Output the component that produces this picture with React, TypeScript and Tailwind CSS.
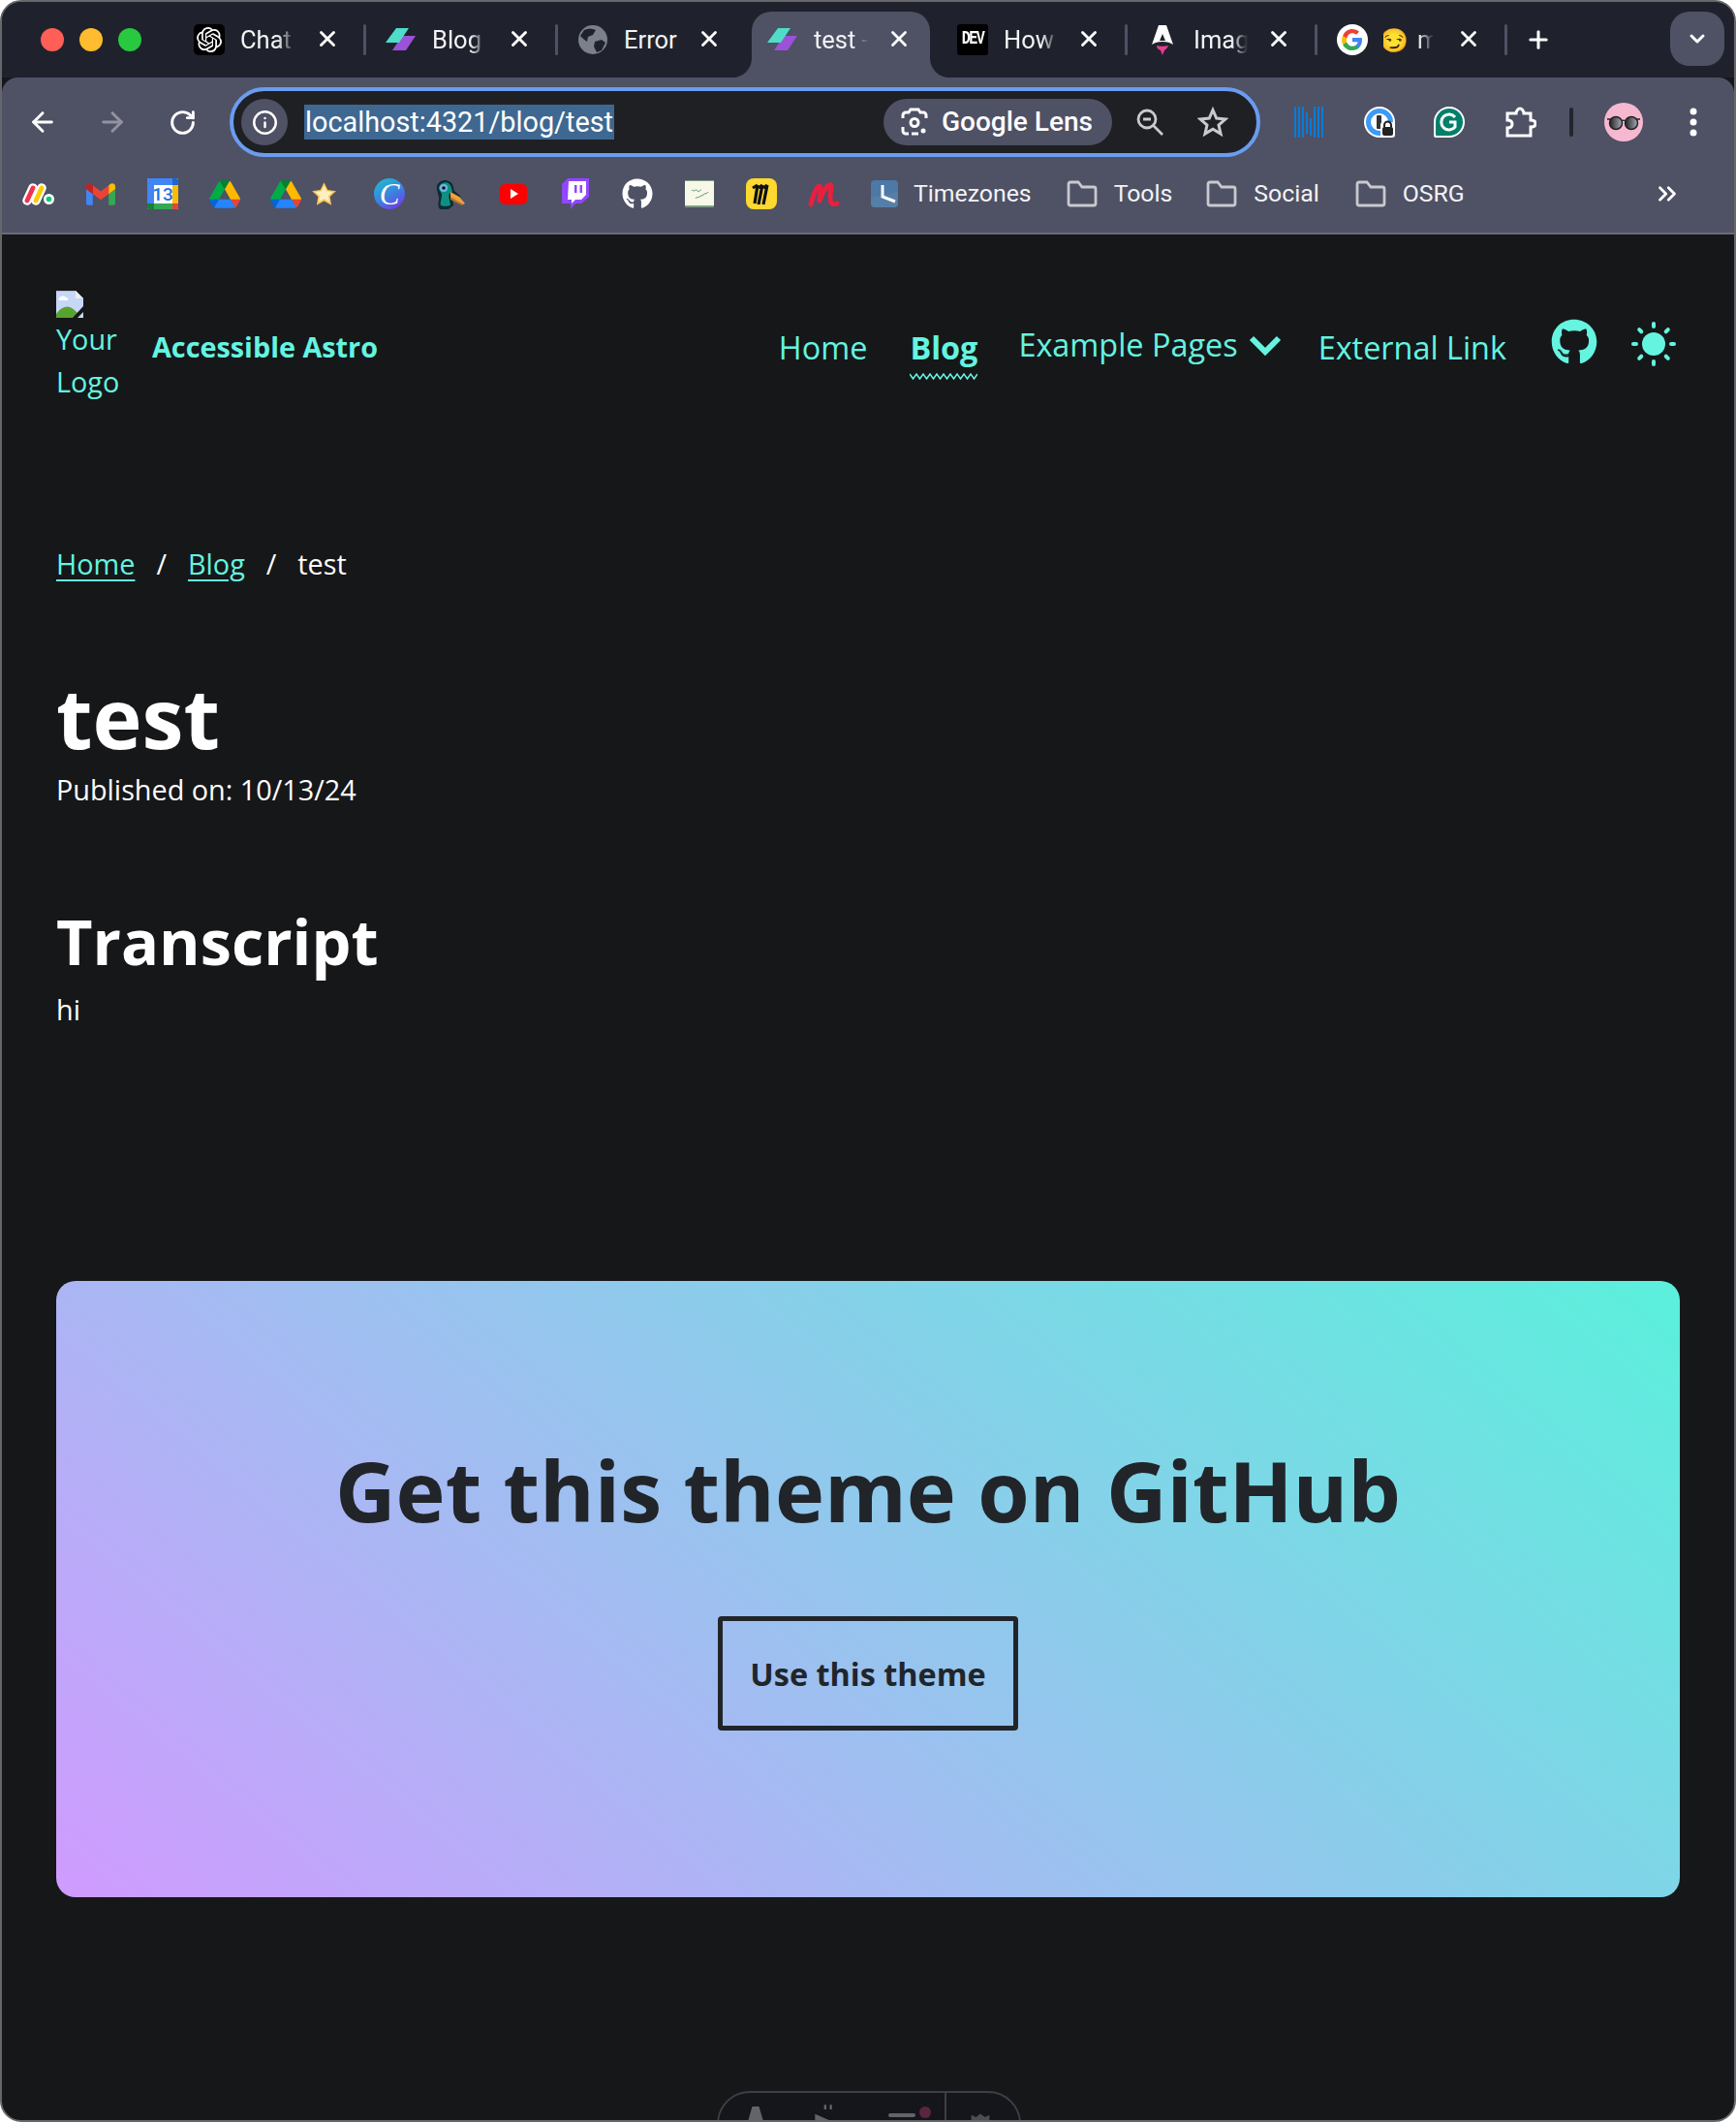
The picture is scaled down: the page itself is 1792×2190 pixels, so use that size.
import React from "react";
import { SiOpenai } from "react-icons/si";
import { FaGithub } from "react-icons/fa";
import { Info, ArrowLeft, ArrowRight, RotateCw, X, Plus, ChevronDown, ChevronsRight } from "lucide-react";

const Astro = () => (
  <svg viewBox="0 0 32 32" className="w-8 h-8">
    <path d="M7 27l10-15h14L21 27z" fill="#9b51d8" />
    <path d="M0 19L11 4h13L14 19z" fill="#4fdcc8" />
  </svg>
);

const Globe = () => (
  <svg viewBox="0 0 32 32" className="w-8 h-8">
    <circle cx="16" cy="16" r="15" fill="#7c808a" />
    <path d="M7 6c4-2 8-2 12 0l-3 5-5 2-1 5-4-3-3-3zM18 18l7-2 4 3-4 8-5 2-3-6z" fill="#1f222c" />
  </svg>
);

const Dev = () => (
  <div className="w-8 h-8 bg-black rounded-[3px] flex items-center justify-center text-white text-[15px] font-bold [font-family:'Liberation_Mono',monospace] tracking-[-1.500px]">
    <span className="[transform:scaleY(1.350)]">DEV</span>
  </div>
);

const AstroRocket = () => (
  <svg viewBox="0 0 32 32" className="w-8 h-8">
    <path d="M12 1h8l7 20c-3-2-6-3-11-3s-8 1-11 3z" fill="#fff" />
    <path d="M16 10l3 7h-6z" fill="#1f222c" />
    <path d="M10 22c2 1 10 1 12 0-1 3-3 4-4 5l-2 5-2-5c-2-1-4-2-4-5z" fill="#ea3d92" />
  </svg>
);

const GoogleG = ({ size = 32 }: { size?: number }) => (
  <svg viewBox="0 0 32 32" width={size} height={size}>
    <circle cx="16" cy="16" r="16" fill="#fff" />
    <path d="M26 16.300c0-.8-.1-1.500-.2-2.200H16v4.200h5.600c-.2 1.400-1 2.500-2.100 3.300v2.700h3.400c2-1.800 3.100-4.600 3.100-8z" fill="#4285f4" />
    <path d="M16 27c2.800 0 5.100-.9 6.900-2.500l-3.400-2.700c-.9.600-2.100 1-3.500 1-2.700 0-5-1.800-5.800-4.300H6.200v2.700C8 24.700 11.700 27 16 27z" fill="#34a853" />
    <path d="M10.200 18.500c-.4-1.300-.4-2.700 0-4v-2.700H6.200c-1.500 3-1.500 6.400 0 9.400z" fill="#fbbc05" />
    <path d="M16 9.200c1.500 0 2.900.5 4 1.600l3-3C21.100 6 18.700 5 16 5c-4.300 0-8 2.300-9.800 6.800l4 2.700C11 11 13.300 9.200 16 9.200z" fill="#ea4335" />
  </svg>
);

const tabs: { icon: React.ReactNode; text?: string; extra?: React.ReactNode; active?: boolean; sep?: boolean; wide?: boolean; full?: boolean }[] = [
  { icon: <div className="w-8 h-8 bg-black rounded-[5px] flex items-center justify-center"><SiOpenai className="text-white text-[26px]" /></div>, text: "Chat GPT", sep: true, wide: true },
  { icon: <Astro />, text: "Blog Posts", sep: true, wide: true },
  { icon: <Globe />, text: "Error", sep: false, full: true },
  { icon: <Astro />, text: "test - Acc", active: true, sep: false },
  { icon: <Dev />, text: "How to", sep: true },
  { icon: <AstroRocket />, text: "Images", sep: true },
  { icon: <GoogleG />, extra: <span className="text-[24px] leading-none">😏</span>, text: "m", sep: true },
];

const Tab = ({ t }: { t: (typeof tabs)[number] }) => (
  <div className={`relative h-[68px] flex items-start pl-[22px] pt-[13px] shrink-0 ${t.wide ? "w-[198px]" : "w-[196px]"}`}>
    {t.active && (
      <>
        <div className="absolute left-[6px] right-[6px] top-0 bottom-0 bg-[#4f5165] rounded-t-[20px]" />
        <div className="absolute left-[-14px] bottom-0 w-5 h-5 bg-[#4f5165]"><div className="w-full h-full bg-[#1f222c] rounded-br-[20px]" /></div>
        <div className="absolute right-[-14px] bottom-0 w-5 h-5 bg-[#4f5165]"><div className="w-full h-full bg-[#1f222c] rounded-bl-[20px]" /></div>
      </>
    )}
    <div className="relative w-8 h-8 shrink-0 flex items-center justify-center">{t.icon}</div>
    {t.full ? (
      <div className="relative ml-4 flex items-center h-8 text-[25.500px] text-[#f2f3f5] whitespace-nowrap">{t.text}</div>
    ) : (
      <div className={`relative ml-4 flex items-center h-8 text-[25.500px] text-[#f2f3f5] whitespace-nowrap overflow-hidden [mask-image:linear-gradient(to_right,black_70%,transparent)] ${t.extra ? "w-[52px]" : "w-[56px]"}`}>
        {t.extra && <span className="mr-[9px] ml-[-4px]">{t.extra}</span>}
        {t.text}
      </div>
    )}
    <X className={`absolute top-[15px] text-white ${t.wide ? "left-[147px]" : "left-[145px]"}`} size={26} strokeWidth={2.600} />
    {t.sep && <div className="absolute right-[-2px] top-[13px] w-[3px] h-8 bg-[#4f5165] rounded-full" />}
  </div>
);

const Bm = ({ children }: { children: React.ReactNode }) => (
  <div className="h-10 w-16 flex items-center justify-center shrink-0">{children}</div>
);

function Drive() {
  return (
    <svg viewBox="0 0 87.300 78" className="w-8 h-[29px]">
      <path d="M6.600 66.850l3.850 6.650c.8 1.400 1.950 2.500 3.300 3.300l13.750-23.800H0c0 1.550.4 3.100 1.200 4.500z" fill="#0066da" />
      <path d="M43.650 25L29.900 1.200c-1.350.8-2.500 1.900-3.300 3.300L1.200 48.500A9.060 9.060 0 000 53h27.500z" fill="#00ac47" />
      <path d="M73.550 76.800c1.350-.8 2.500-1.900 3.300-3.300l1.600-2.750 7.650-13.250c.8-1.400 1.200-2.950 1.200-4.500H59.800l5.850 11.500z" fill="#ea4335" />
      <path d="M43.650 25L57.400 1.200C56.050.4 54.500 0 52.900 0H34.400c-1.600 0-3.150.45-4.500 1.200z" fill="#00832d" />
      <path d="M59.800 53H27.500L13.750 76.800c1.350.8 2.900 1.200 4.500 1.200h50.800c1.600 0 3.150-.45 4.500-1.200z" fill="#2684fc" />
      <path d="M73.400 26.500l-12.700-22c-.8-1.400-1.950-2.500-3.300-3.300L43.650 25 59.800 53h27.450c0-1.550-.4-3.100-1.200-4.500z" fill="#ffba00" />
    </svg>
  );
}

const FolderIcon = ({ ml }: { ml: string }) => (
  <svg viewBox="0 0 32 28" className={`w-8 h-7 shrink-0 ${ml}`} fill="none" stroke="#c9c9cf" strokeWidth="2.800">
    <path d="M2 4a2 2 0 012-2h8l4 5h12a2 2 0 012 2v15a2 2 0 01-2 2H4a2 2 0 01-2-2z" />
  </svg>
);

const Bookmarks = () => (
  <div className="h-[68px] flex items-center pl-[6px] pb-[12px] shrink-0 text-[24.800px] text-[#f2f3f5]">
    <Bm>
      <svg viewBox="0 0 34 24" className="w-[34px] h-6" strokeLinecap="round" fill="none">
        <path d="M5 19L11 6M14 19L20 6" stroke="#fff" strokeWidth="9.500" />
        <circle cx="27.500" cy="17.500" r="5.500" fill="#fff" />
        <path d="M5 19L11 6" stroke="#f0344f" strokeWidth="4.800" />
        <path d="M14 19L20 6" stroke="#ffcb00" strokeWidth="4.800" />
        <circle cx="27.500" cy="17.500" r="2.800" fill="#00ca72" />
      </svg>
    </Bm>
    <Bm>
      <svg viewBox="52 42 88 66" className="w-[30px] h-[23px]">
        <path fill="#4285f4" d="M58 108h14V74L52 59v43c0 3.320 2.690 6 6 6" />
        <path fill="#34a853" d="M120 108h14c3.320 0 6-2.690 6-6V59l-20 15" />
        <path fill="#fbbc04" d="M120 48v26l20-15v-8c0-7.420-8.470-11.650-14.400-7.200" />
        <path fill="#ea4335" d="M72 74V48l24 18 24-18v26L96 92" />
        <path fill="#c5221f" d="M52 51v8l20 15V48l-5.600-4.200c-5.940-4.450-14.400-.22-14.400 7.200" />
      </svg>
    </Bm>
    <Bm>
      <div className="relative w-8 h-8 bg-white rounded-[2px] overflow-hidden flex items-center justify-center text-[#1a73e8] text-[19px] font-medium leading-none">
        13
        <div className="absolute top-0 inset-x-0 h-[7px] bg-[#4285f4]" />
        <div className="absolute left-0 inset-y-0 w-[7px] bg-[#4285f4]" />
        <div className="absolute right-0 inset-y-0 w-[6px] bg-[#fbbc05]" />
        <div className="absolute top-0 right-0 w-[6px] h-[7px] bg-[#1967d2]" />
        <div className="absolute bottom-0 inset-x-0 h-[6px] bg-[#34a853]" />
        <div className="absolute bottom-0 left-0 w-[7px] h-[6px] bg-[#188038]" />
        <div className="absolute bottom-0 right-0 w-[6px] h-[6px] bg-[#ea4335]" />
      </div>
    </Bm>
    <Bm><Drive /></Bm>
    <div className="ml-[15px] w-8 flex justify-center shrink-0"><Drive /></div>
    <div className="ml-[10px] w-[27px] flex justify-center shrink-0">
      <svg viewBox="0 0 24 24" className="w-[27px] h-[27px]"><path d="M12 1l3.400 7 7.600 1-5.500 5.300 1.300 7.700-6.800-3.700-6.800 3.700 1.300-7.700L1 9l7.600-1z" fill="#f7c552" /><path d="M12 4l2.500 5 5.500.8-4 3.800 1 5.400-5-2.700-5 2.700 1-5.400-4-3.800 5.500-.8z" fill="#feefc0" /></svg>
    </div>
    <div className="ml-[22px] flex shrink-0">
      <Bm>
        <div className="w-8 h-8 rounded-full bg-[linear-gradient(150deg,#19c4cf,#3f7de0_55%,#7d2ae8)] flex items-center justify-center text-white italic text-[31px] leading-none [font-family:'Liberation_Serif',serif]">C</div>
      </Bm>
      <Bm>
        <svg viewBox="0 0 32 32" className="w-8 h-8">
          <path d="M1 8c2-6 9-8 14-4 3 2 3 6 4 9l7 6-9 1 1 8-5 4H5c-3-1-3-5-2-9 1-5-3-10-2-15z" fill="#0d2b30" />
          <path d="M3 9c2-5 8-6 11-3 2 2 2 5 3 8-4 1-4 4-3 8l1 6c-3 1-8 1-10 0-1-3 1-7 1-11 0-3-4-5-3-8z" fill="#0e8f83" />
          <circle cx="8" cy="10" r="4" fill="#6fb6e8" /><circle cx="8" cy="10" r="1.800" fill="#111" />
          <path d="M15 14l9 5 6 7-2 1-13-7z" fill="#f0a13a" />
          <path d="M15 19l13 8-1 1-12-6z" fill="#b9772a" />
        </svg>
      </Bm>
      <Bm>
        <div className="w-7 h-[21px] rounded-[5px] bg-[#f00] flex items-center justify-center"><div className="w-0 h-0 border-y-[5px] border-y-transparent border-l-[8px] border-l-white ml-[1px]" /></div>
      </Bm>
      <Bm>
        <svg viewBox="0 0 28 32" className="w-7 h-8">
          <path d="M6 0h22v19l-8 7h-6l-5 6v-6H0V6z" fill="#9146ff" />
          <path d="M7 3h18v14l-5 5h-6l-4 4v-4H6z" fill="#fff" />
          <path d="M13 7h2.500v8H13zM18.500 7H21v8h-2.500z" fill="#9146ff" />
        </svg>
      </Bm>
      <Bm><FaGithub className="text-white text-[32px]" /></Bm>
      <Bm>
        <div className="w-[30px] h-[28px] bg-[#f8f8e8] rounded-[1px] border-b-2 border-t border-[#7fa08a] flex items-center justify-center">
          <svg viewBox="0 0 24 20" className="w-6 h-5"><path d="M4 7c2-2 2 1 3 0s1-2 3 0 2-1 4-1M8 15c2-3 2 0 4-2s3 0 4-2 3 0 5-3" stroke="#4f8a6a" strokeWidth="1" fill="none" /></svg>
        </div>
      </Bm>
      <Bm>
        <svg viewBox="0 0 32 32" className="w-8 h-8">
          <rect width="32" height="32" rx="8" fill="#ffd830" />
          <path d="M9 26L12 7M13 27l4-20M18 27L22 7M12 7L7 10M17 7l-4 3M22 7l-4 3" stroke="#111" strokeWidth="3.200" fill="none" />
        </svg>
      </Bm>
      <Bm>
        <svg viewBox="0 0 32 28" className="w-8 h-7" fill="none" stroke="#e8203f" strokeWidth="5" strokeLinecap="round" strokeLinejoin="round">
          <path d="M3 25C5 17 7 11 10 7c2-2 3 0 3 3l-1 11c3-8 6-14 10-16 2-1 2 1 2 3-1 6-2 12 0 15 1 2 3 2 6 1" />
        </svg>
      </Bm>
    </div>
    <svg viewBox="0 0 28 28" className="ml-[17px] w-7 h-7 shrink-0 rounded-[4px]">
      <rect width="28" height="28" fill="#4c79a6" />
      <path d="M0 18L28 12v16H0z" fill="#5b83a8" opacity=".6" />
      <path d="M12 5v12l13 5" stroke="#fff" strokeWidth="3" fill="none" />
    </svg>
    <span className="ml-[16px] shrink-0">Timezones</span>
    <FolderIcon ml="ml-[36px]" />
    <span className="ml-[17px] shrink-0">Tools</span>
    <FolderIcon ml="ml-[35px]" />
    <span className="ml-[17px] shrink-0">Social</span>
    <FolderIcon ml="ml-[37px]" />
    <span className="ml-[17px] shrink-0">OSRG</span>
    <ChevronsRight className="ml-auto mr-[54px] text-white" size={30} strokeWidth={2.200} />
  </div>
);

const Chrome = () => (
  <header className="shrink-0 [font-family:Roboto,sans-serif]">
    <div className="h-[78px] bg-[#1f222c] flex pt-[10px] relative">
      <div className="flex items-center gap-4 pl-[40px] w-[176px] h-[58px] shrink-0">
        <div className="w-6 h-6 rounded-full bg-[#ff5f57] shrink-0" />
        <div className="w-6 h-6 rounded-full bg-[#febc2e] shrink-0" />
        <div className="w-6 h-6 rounded-full bg-[#28c840] shrink-0" />
      </div>
      {tabs.map((t, i) => <Tab key={i} t={t} />)}
      <Plus className="ml-[20px] mt-[15px] text-white shrink-0" size={28} strokeWidth={2.600} />
      <div className="ml-auto mr-[10px] w-14 h-14 rounded-[20px] bg-[#4f5165] flex items-center justify-center shrink-0">
        <ChevronDown className="text-white" size={24} strokeWidth={3} />
      </div>
    </div>
    <div className="bg-[#4f5165] rounded-t-[16px] border-b-2 border-[#6b6c78] relative">
      <div className="h-[92px] flex items-center">
        <ArrowLeft className="ml-[26px] text-white shrink-0" size={32} strokeWidth={2.200} />
        <ArrowRight className="ml-[40px] text-[#92939f] shrink-0" size={32} strokeWidth={2.200} />
        <RotateCw className="ml-[42px] text-white shrink-0" size={29} strokeWidth={2.400} />
        <div className="ml-[34px] w-[1064px] h-[72px] rounded-full border-4 border-[#6a9cf0] bg-[#1f2024] flex items-center shrink-0 pl-2 pr-2">
          <div className="w-12 h-12 rounded-full bg-[#4f5165] flex items-center justify-center shrink-0">
            <Info className="text-white" size={27} strokeWidth={2.200} />
          </div>
          <span className="ml-[17px] h-[36px] px-[1px] bg-[#3e6891] text-white text-[28.800px] leading-[36px] whitespace-nowrap">localhost:4321/blog/test</span>
          <div className="ml-auto h-12 w-[236px] rounded-full bg-[#4f5165] flex items-center pl-[17px] text-white text-[28px] font-medium shrink-0">
            <svg viewBox="0 0 30 30" className="w-[30px] h-[30px] mr-[13px] shrink-0" fill="none" stroke="#fff" strokeWidth="3">
              <path d="M3 11V8a3 3 0 013-3h3l2-3h8l2 3h3a3 3 0 013 3v3M9 27H6a3 3 0 01-3-3v-4M19 27h-7" />
              <circle cx="15" cy="15.500" r="4" />
              <circle cx="24" cy="24" r="2.500" fill="#fff" stroke="none" />
            </svg>
            Google Lens
          </div>
          <svg viewBox="0 0 28 28" className="ml-[25px] w-7 h-7 shrink-0" fill="none" stroke="#c9c9cf" strokeWidth="2.800">
            <circle cx="11" cy="11" r="9" />
            <path d="M7 11h8M17.500 17.500L27 27" />
          </svg>
          <svg viewBox="0 0 32 32" className="ml-[35px] mr-[21px] w-8 h-8 shrink-0" fill="none" stroke="#c9c9cf" strokeWidth="3" strokeLinejoin="miter">
            <path d="M16 3.500l3.700 8.600 9.300.8-7 6.100 2.100 9.100-8.100-4.800-8.100 4.800 2.100-9.100-7-6.100 9.300-.8z" />
          </svg>
        </div>
        <svg viewBox="0 0 32 32" className="ml-[35px] w-8 h-8 shrink-0" stroke="#0a7bd8" strokeWidth="2" fill="none">
          <path d="M1 0v32M5 0v32M9 0v32M13 6v22M17 12v18M21 0v32M25 0v32M29 0v32" />
        </svg>
        <svg viewBox="0 0 32 32" className="ml-[40px] w-8 h-8 shrink-0">
          <circle cx="16" cy="16" r="16" fill="#fff" />
          <circle cx="16" cy="16" r="11.500" fill="none" stroke="#3d9bf5" strokeWidth="5" />
          <rect x="13" y="9" width="5" height="14" rx="1" fill="#333" />
          <rect x="17" y="16" width="15" height="16" rx="3" fill="#fff" />
          <rect x="19" y="21" width="11" height="9" rx="2" fill="#222" />
          <path d="M21 21v-2a3.500 3.500 0 017 0v2" fill="none" stroke="#222" strokeWidth="2" />
        </svg>
        <svg viewBox="0 0 32 32" className="ml-[40px] w-8 h-8 shrink-0">
          <path d="M0 16a16 16 0 1132 0v0a16 16 0 01-16 16H2a2 2 0 01-2-2z" fill="#fff" />
          <path d="M2 16a14 14 0 1128 0 14 14 0 01-14 14H3a1 1 0 01-1-1z" fill="#00806a" />
          <path d="M22 11a8 8 0 100 10v-5h-6" fill="none" stroke="#fff" strokeWidth="3" />
        </svg>
        <svg viewBox="0 0 33 32" className="ml-[41px] w-[33px] h-8 shrink-0" fill="none" stroke="#fff" strokeWidth="3">
          <path d="M3 7h9c0-2 2-5 4-5s4 3 4 5h7v7c3 0 5 1 5 3.500s-2 3.500-5 3.500v9H3v-8c3 0 5-1.500 5-4s-2-4-5-4z" />
        </svg>
        <div className="ml-[34px] w-1 h-[30px] bg-[#23252e] rounded-full shrink-0" />
        <svg viewBox="0 0 40 40" className="ml-[32px] w-10 h-10 shrink-0">
          <defs>
            <linearGradient id="lens" x1="0" y1="0" x2="1" y2="0"><stop offset="0" stopColor="#222" /><stop offset="1" stopColor="#aab" /></linearGradient>
          </defs>
          <circle cx="20" cy="20" r="20" fill="#f6b8cf" />
          <circle cx="12" cy="21" r="6.500" fill="url(#lens)" stroke="#222" strokeWidth="1.500" />
          <circle cx="28" cy="21" r="6.500" fill="url(#lens)" stroke="#222" strokeWidth="1.500" />
          <path d="M3 17h4M33 17h4M18 19c1-1 3-1 4 0" stroke="#222" strokeWidth="1.500" fill="none" />
        </svg>
        <svg viewBox="0 0 8 30" className="ml-[48px] w-2 h-[30px] shrink-0" fill="#fff">
          <circle cx="4" cy="4" r="3.500" /><circle cx="4" cy="15" r="3.500" /><circle cx="4" cy="26" r="3.500" />
        </svg>
      </div>
      <Bookmarks />
    </div>
  </header>
);

const TEAL = "text-[#64f4e0]";

const BrokenImage = () => (
  <svg viewBox="0 0 28 28" className="w-7 h-7 block">
    <path d="M0 0h20l8 8v20H0z" fill="#c7d7f7" />
    <path d="M20 0v8h8z" fill="#eee" />
    <path d="M0 28v-4c4-6 10-9 14-7 3 1 6 4 9 7l-4 4z" fill="#58a32e" />
    <path d="M3 8c2-3 5-3 7-1 3 0 3 3 1 3H4c-2 0-2-2-1-2z" fill="#fff" />
    <path d="M28 16L17 28h5l6-6z" fill="#16171a" />
    <path d="M0 0.500h20" stroke="#bbb" strokeWidth="1" />
  </svg>
);

const Wave = () => (
  <svg viewBox="0 0 70 7" className="absolute left-0 bottom-[-10px] w-[70px] h-[7px]" fill="none" stroke="#64f4e0" strokeWidth="1.500">
    <path d="M0 1l3.500 5 3.500-5 3.500 5 3.500-5 3.500 5 3.500-5 3.500 5 3.500-5 3.500 5 3.500-5 3.500 5 3.500-5 3.500 5 3.500-5 3.500 5 3.500-5 3.500 5 3.500-5 3.500 5 3.500-5" />
  </svg>
);

const Sun = () => (
  <svg viewBox="0 0 46 46" className="w-[46px] h-[46px]" fill="#64f4e0">
    <circle cx="23" cy="23" r="12" />
    <rect x="21" y="0" width="4" height="7" rx="2" />
    <rect x="21" y="39" width="4" height="7" rx="2" />
    <rect x="0" y="21" width="7" height="4" rx="2" />
    <rect x="39" y="21" width="7" height="4" rx="2" />
    <rect x="21" y="0" width="4" height="7" rx="2" transform="rotate(45 23 23)" />
    <rect x="21" y="0" width="4" height="7" rx="2" transform="rotate(135 23 23)" />
    <rect x="21" y="0" width="4" height="7" rx="2" transform="rotate(225 23 23)" />
    <rect x="21" y="0" width="4" height="7" rx="2" transform="rotate(315 23 23)" />
  </svg>
);

const SiteHeader = () => (
  <div className={`h-[164px] pl-[56px] pr-[60px] pt-[58px] flex items-start ${TEAL}`}>
    <div className="w-[70px] text-[28.800px] leading-[44px] shrink-0">
      <BrokenImage />
      <div>Your</div>
      <div>Logo</div>
    </div>
    <div className="ml-[29px] mt-[36px] text-[28.800px] leading-[44px] font-bold">Accessible Astro</div>
    <nav className="ml-auto flex items-start text-[32.400px] leading-[48px] mt-[34px]">
      <a>Home</a>
      <a className="relative ml-[44px] font-bold">Blog<Wave /></a>
      <div className="ml-[42px] flex items-center -mt-[3px]">
        Example Pages
        <svg viewBox="0 0 34 22" className="ml-[11px] w-[34px] h-[22px] mt-1" fill="none" stroke="#64f4e0" strokeWidth="6"><path d="M3 3l14 14L31 3" /></svg>
      </div>
      <a className="ml-[38px]">External Link</a>
      <FaGithub className="ml-[46px] text-[48px] -mt-[5px]" />
      <div className="ml-[35px] -mt-[2px]"><Sun /></div>
    </nav>
  </div>
);

const Main = () => (
  <main className="px-[56px] text-white">
    <div className="mt-[154px] flex text-[28.800px] leading-[44px]">
      <a className={`${TEAL} underline underline-offset-[5px]`}>Home</a>
      <span className="ml-[22px]">/</span>
      <a className={`ml-[22px] ${TEAL} underline underline-offset-[5px]`}>Blog</a>
      <span className="ml-[22px]">/</span>
      <span className="ml-[22px]">test</span>
    </div>
    <h1 className="mt-[86px] text-[86.400px] leading-[100px] font-bold">test</h1>
    <p className="mt-[3px] text-[28.800px] leading-[44px]">Published on: 10/13/24</p>
    <h2 className="mt-[96px] text-[64.800px] leading-[76px] font-bold">Transcript</h2>
    <p className="mt-[11px] text-[28.800px] leading-[44px]">hi</p>
    <section className="mt-[258px] h-[636px] rounded-[20px] bg-[linear-gradient(40deg,#d09bff,#5af0dc)] flex flex-col items-center text-[#212529]">
      <h2 className="mt-[162px] text-[86.400px] leading-[108px] font-bold">Get this theme on GitHub</h2>
      <a className="mt-[76px] w-[310px] h-[118px] border-[5px] border-[#212529] rounded-[4px] flex items-center justify-center text-[32.400px] font-bold">Use this theme</a>
    </section>
  </main>
);

const Toolbar = () => (
  <div className="absolute left-[738px] bottom-[-40px] w-[314px] h-[70px] rounded-t-[34px] bg-[#15161c] border-2 border-[#3e3f46] flex items-start">
    <svg viewBox="0 0 24 24" className="absolute left-[24px] top-[14px] w-7 h-7" fill="#63646a"><path d="M9 0h6l7 24H2z" /></svg>
    <svg viewBox="0 0 24 24" className="absolute left-[97px] top-[10px] w-7 h-7" fill="#63646a"><path d="M2 10l18 8-4 6H2zM10 2h2v4h-2zM15 2h2v4h-2z" /></svg>
    <div className="absolute left-[175px] top-[21px] w-7 h-1 bg-[#63646a] rounded-full" />
    <div className="absolute left-[207px] top-[14px] w-[12px] h-[12px] bg-[#5b2540] rounded-full" />
    <div className="absolute left-[233px] top-0 bottom-0 w-[2px] bg-[#3e3f46]" />
    <svg viewBox="0 0 24 24" className="absolute left-[256px] top-[18px] w-7 h-7" fill="#4d4e54"><path d="M4 4l4 2 4-3 4 3 4-2v20H4z" /></svg>
  </div>
);

export default function App() {
  return (
    <div className="w-[1792px] h-[2190px] bg-white [font-family:'Open_Sans',sans-serif]">
      <div className="relative w-full h-full rounded-[22px] overflow-hidden border-2 border-[#66676b] bg-[#161719] flex flex-col">
        <Chrome />
        <SiteHeader />
        <Main />
        <Toolbar />
      </div>
    </div>
  );
}
